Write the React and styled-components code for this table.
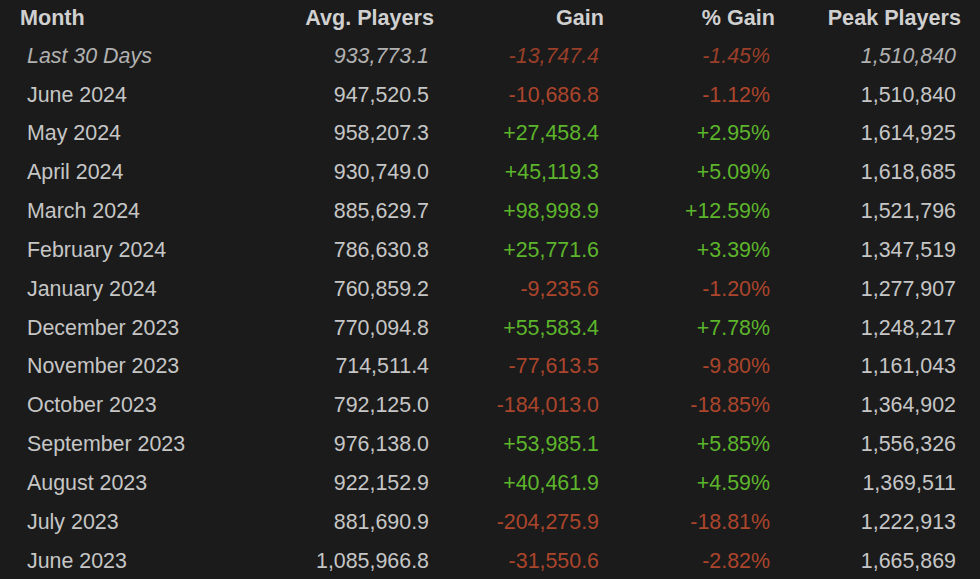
import React from "react";
import styled, { createGlobalStyle, css } from "styled-components";

const Global = createGlobalStyle`
  html, body { margin: 0; padding: 0; background: #1b1b1b; }
  body { font-family: "Liberation Sans", Arial, sans-serif; }
`;

const Page = styled.div`
  width: 980px;
  height: 579px;
  overflow: hidden;
  background: #1b1b1b;
`;

const Table = styled.table`
  width: 966px;
  border-collapse: collapse;
  table-layout: fixed;
  font-size: 21.4px;
`;

const HeadCell = styled.th`
  height: 35px;
  padding: 0 5px 2px 0;
  font-weight: bold;
  font-size: 21.6px;
  color: #d0d0d0;
  text-align: ${(p) => (p.$left ? "left" : "right")};
  padding-left: ${(p) => (p.$left ? "20px" : "0")};
  vertical-align: middle;
  line-height: 1;
`;

const Row = styled.tr`
  height: 38.85px;
`;

const toneColor = {
  neutral: "#c6c6c6",
  up: "#5db52b",
  down: "#ab452c",
};

const Cell = styled.td`
  padding: 0 10px 0 0;
  text-align: ${(p) => (p.$left ? "left" : "right")};
  padding-left: ${(p) => (p.$left ? "27px" : "0")};
  color: ${(p) => toneColor[p.$tone || "neutral"]};
  vertical-align: middle;
  line-height: 1;
  white-space: nowrap;
  ${(p) =>
    p.$italic &&
    css`
      font-style: italic;
      opacity: 0.88;
    `}
`;

const rows = [
  ["Last 30 Days", "933,773.1", "-13,747.4", "-1.45%", "1,510,840", true],
  ["June 2024", "947,520.5", "-10,686.8", "-1.12%", "1,510,840"],
  ["May 2024", "958,207.3", "+27,458.4", "+2.95%", "1,614,925"],
  ["April 2024", "930,749.0", "+45,119.3", "+5.09%", "1,618,685"],
  ["March 2024", "885,629.7", "+98,998.9", "+12.59%", "1,521,796"],
  ["February 2024", "786,630.8", "+25,771.6", "+3.39%", "1,347,519"],
  ["January 2024", "760,859.2", "-9,235.6", "-1.20%", "1,277,907"],
  ["December 2023", "770,094.8", "+55,583.4", "+7.78%", "1,248,217"],
  ["November 2023", "714,511.4", "-77,613.5", "-9.80%", "1,161,043"],
  ["October 2023", "792,125.0", "-184,013.0", "-18.85%", "1,364,902"],
  ["September 2023", "976,138.0", "+53,985.1", "+5.85%", "1,556,326"],
  ["August 2023", "922,152.9", "+40,461.9", "+4.59%", "1,369,511"],
  ["July 2023", "881,690.9", "-204,275.9", "-18.81%", "1,222,913"],
  ["June 2023", "1,085,966.8", "-31,550.6", "-2.82%", "1,665,869"],
];

const tone = (v) => (v.startsWith("+") ? "up" : v.startsWith("-") ? "down" : "neutral");

export default function App() {
  return (
    <Page>
      <Global />
      <Table>
        <colgroup>
          <col style={{ width: 300 }} />
          <col style={{ width: 139 }} />
          <col style={{ width: 170 }} />
          <col style={{ width: 171 }} />
          <col style={{ width: 186 }} />
        </colgroup>
        <thead>
          <tr>
            <HeadCell $left>Month</HeadCell>
            <HeadCell>Avg. Players</HeadCell>
            <HeadCell>Gain</HeadCell>
            <HeadCell>% Gain</HeadCell>
            <HeadCell>Peak Players</HeadCell>
          </tr>
        </thead>
        <tbody>
          {rows.map(([m, avg, gain, pct, peak, it]) => (
            <Row key={m}>
              <Cell $left $italic={it}>{m}</Cell>
              <Cell $italic={it}>{avg}</Cell>
              <Cell $italic={it} $tone={tone(gain)}>{gain}</Cell>
              <Cell $italic={it} $tone={tone(pct)}>{pct}</Cell>
              <Cell $italic={it}>{peak}</Cell>
            </Row>
          ))}
        </tbody>
      </Table>
    </Page>
  );
}
